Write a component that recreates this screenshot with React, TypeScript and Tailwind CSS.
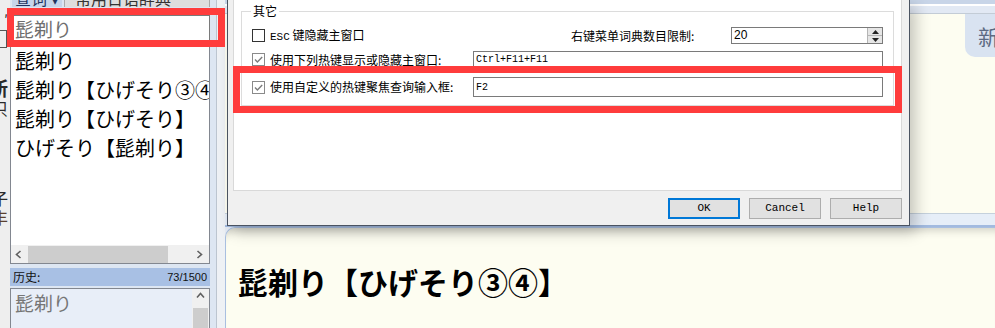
import React from 'react';

const jp = "font-['Noto_Sans_CJK_JP','Noto_Sans_CJK_SC',sans-serif]";
const sc = "font-['Noto_Sans_CJK_SC',sans-serif]";
const mono = "font-['Liberation_Mono',monospace]";

function Check({ checked }: { checked?: boolean }) {
  return (
    <span
      className={`flex h-[13px] w-[13px] shrink-0 items-center justify-center border bg-white ${
        checked ? 'border-[#8a8a8a]' : 'border-[#333333]'
      }`}
    >
      {checked && (
        <svg viewBox="0 0 11 11" className="h-[11px] w-[11px]">
          <path d="M2 5.5l2.4 2.4L9.2 3" fill="none" stroke="#7b7b7b" strokeWidth="1.4" />
        </svg>
      )}
    </span>
  );
}

function Chevron({ dir }: { dir: 'left' | 'right' | 'up' }) {
  const d = dir === 'left' ? 'M5.5 1L1.5 4.5l4 3.5' : dir === 'right' ? 'M1.5 1l4 3.5-4 3.5' : 'M1 5.5l3.5-4 3.5 4';
  return (
    <svg viewBox="0 0 9 9" className="h-[9px] w-[9px]">
      <path d={d} fill="none" stroke="#606060" strokeWidth="1.6" />
    </svg>
  );
}

function Btn({ label, primary }: { label: string; primary?: boolean }) {
  return (
    <div
      className={`flex h-[21px] w-[72px] items-center justify-center bg-[#e1e1e1] text-[11px] text-black ${mono} ${
        primary ? 'border-2 border-[#0078d7]' : 'border border-[#adadad]'
      }`}
    >
      {label}
    </div>
  );
}

function LeftPanel() {
  const items = ['髭剃り', '髭剃り【ひげそり③④】', '髭剃り【ひげそり】', 'ひげそり【髭剃り】'];
  return (
    <div className="flex w-[225px] shrink-0">
      {/* window behind, peeking out */}
      <div className={`flex w-[10px] shrink-0 flex-col overflow-hidden bg-[#eeeeee] pr-[2px] text-[#2a2a2a] ${jp}`}>
        <div className="mt-[12px] flex h-[14px] justify-end text-[14px] leading-[14px]">′</div>
        <div className="mt-[4px] h-[18px] w-[7px] border border-l-0 border-[#555555]" />
        <div className="mt-[30px] flex h-[20px] justify-end">
          <span className="shrink-0 whitespace-nowrap text-[19px] font-bold leading-[20px]">新</span>
        </div>
        <div className="flex h-[20px] justify-end">
          <span className="shrink-0 whitespace-nowrap text-[16px] leading-[20px]">只</span>
        </div>
        <div className="mt-[70px] flex h-[20px] justify-end">
          <span className="shrink-0 whitespace-nowrap text-[16px] leading-[20px]">子</span>
        </div>
        <div className="flex h-[18px] justify-end">
          <span className="shrink-0 whitespace-nowrap text-[16px] leading-[18px] text-[#5a4030]">丰</span>
        </div>
      </div>

      <div className={`flex w-[200px] shrink-0 flex-col bg-[#dde6f2] ${jp}`}>
        <div className="flex h-[7px] overflow-hidden">
          <div className="ml-[2px] w-[50px] bg-[#c6d5ea] pl-[3px] text-[16px] leading-[16px] text-[#1f3560]">
            <div className="mt-[-10px] whitespace-nowrap">查词 ▾</div>
          </div>
          <div className="ml-[2px] flex-1 border-x border-[#a9a9a9] bg-[#dedede] pl-[10px] text-[16px] leading-[16px] text-[#333333]">
            <div className="mt-[-10px] whitespace-nowrap">常用日语辞典</div>
          </div>
        </div>

        <div className="mt-[8px] ml-[2px] flex h-[27px] items-center border border-[#7a7a7a] bg-white pl-[2px] text-[19px] leading-[25px] text-[#6e6e6e]">
          髭剃り
        </div>

        <div className="mt-[1px] flex h-[234px] flex-col border border-[#828790] bg-white">
          <div className="flex-1 overflow-hidden pl-[4px] pt-[2px]">
            {items.map((t) => (
              <div key={t} className="h-[29px] whitespace-nowrap text-[20px] leading-[29px] text-black">
                {t}
              </div>
            ))}
          </div>
          <div className="flex h-[18px] items-center bg-[#f0f0f0]">
            <div className="flex w-[17px] justify-center">
              <Chevron dir="left" />
            </div>
            <div className="h-[17px] w-[140px] bg-[#cdcdcd]" />
            <div className="flex-1" />
            <div className="flex w-[17px] justify-center">
              <Chevron dir="right" />
            </div>
          </div>
        </div>

        <div className="mt-[4px] flex h-[18px] items-center justify-between bg-[#a8c0e4] px-[3px] text-[12px] text-[#111111]">
          <span>历史:</span>
          <span className="font-['Liberation_Sans',sans-serif] text-[11px]">73/1500</span>
        </div>

        <div className="mt-[2px] flex flex-1 border-x border-t border-[#828790] bg-[#e8eef8]">
          <div className="flex-1 pl-[4px] text-[19px] leading-[28px] text-[#767676]">髭剃り</div>
          <div className="flex w-[17px] flex-col items-center bg-[#f0f0f0]">
            <div className="mt-[3px] h-[14px]">
              <Chevron dir="up" />
            </div>
            <div className="mt-[2px] h-[20px] w-[15px] bg-[#cdcdcd]" />
          </div>
        </div>
      </div>

      <div className="flex w-[15px] shrink-0">
        <div className="w-[6px] bg-[#dde6f2]" />
        <div className="w-[1px] bg-[#bcc5d0]" />
        <div className="flex-1 bg-[#eef1f5]" />
      </div>
    </div>
  );
}

function MainWindow() {
  return (
    <div className="flex flex-1 flex-col overflow-hidden bg-[#e6ecf5]">
      <div className="flex h-[213px] flex-col bg-[#fdfdf1]">
        <div className="h-[4px] bg-[#c8d5e8]" />
        <div className="h-[2px] bg-white" />
        <div className="h-[8px] border-b border-[#c3ccd6] bg-[#e2e9f4]" />
        <div className="ml-auto h-[43px] w-[30px] rounded-bl-[10px] bg-[#d9e3f1] pl-[13px] pt-[10px]">
          <span className={`whitespace-nowrap text-[21px] leading-[24px] text-[#5c6a82] ${sc}`}>新</span>
        </div>
      </div>
      <div className="h-[14px] border-t border-b-2 border-t-[#c5d1dc] border-b-[#a2badf] bg-[#e6eef8]" />
      <div className="flex-1 rounded-tl-[10px] border-l border-t border-[#a9bfe0] bg-[#fdfdf1] pl-[12px] pt-[33px] shadow-[inset_0_10px_10px_-8px_rgba(0,0,0,0.2)]">
        <div className={`whitespace-nowrap text-[30px] font-semibold leading-[40px] text-black ${jp}`}>
          髭剃り【ひげそり③④】
        </div>
      </div>
    </div>
  );
}

function OptionsDialog() {
  return (
    <div className={`absolute left-[227px] top-0 flex h-[226px] w-[683px] flex-col border-x border-b border-[#4a5361] bg-[#f0f0f0] shadow-[6px_6px_14px_rgba(0,0,0,0.22)] ${sc}`}>
      <div className="ml-[5px] mr-[7px] h-[191px] border-x border-b border-[#d9d9d9] bg-white px-[7px] pt-[11px] text-[12px] text-black">
        <div className="relative h-[95px] border border-[#dcdcdc] pl-[10px] pr-[9px]">
          <span className="absolute left-[9px] top-[-8px] bg-white px-[2px] text-[12px] leading-[14px]">其它</span>

          <div className="mt-[15px] flex h-[17px] items-center">
            <div className="flex w-[319px] items-center gap-[5px]">
              <Check />
              <span className="whitespace-nowrap">
                <span className={`${mono} text-[11px]`}>ESC</span> 键隐藏主窗口
              </span>
            </div>
            <span className="w-[160px] whitespace-nowrap">右键菜单词典数目限制:</span>
            <div className="flex h-[17px] w-[152px] items-center border border-[#7a7a7a] bg-white">
              <span className="flex-1 pl-[2px] font-['Liberation_Sans',sans-serif] text-[12px] leading-[15px]">20</span>
              <div className="flex h-[15px] w-[15px] flex-col border-l border-[#b5b5b5] bg-[#e6e6e6]">
                <div className="flex flex-1 items-center justify-center border-b border-[#b5b5b5]">
                  <svg viewBox="0 0 7 4" className="h-[4px] w-[7px]">
                    <path d="M0 4L3.5 0 7 4z" fill="#222" />
                  </svg>
                </div>
                <div className="flex flex-1 items-center justify-center">
                  <svg viewBox="0 0 7 4" className="h-[4px] w-[7px]">
                    <path d="M0 0L3.5 4 7 0z" fill="#222" />
                  </svg>
                </div>
              </div>
            </div>
          </div>

          <div className="mt-[7px] flex h-[17px] items-center">
            <div className="flex w-[221px] items-center gap-[5px]">
              <Check checked />
              <span className="whitespace-nowrap">使用下列热键显示或隐藏主窗口:</span>
            </div>
            <div className={`flex h-[17px] w-[410px] items-center border border-[#7a7a7a] bg-white pl-[2px] text-[10px] ${mono}`}>
              Ctrl+F11+F11
            </div>
          </div>

          <div className="mt-[9px] flex h-[20px] items-center">
            <div className="flex w-[221px] items-center gap-[5px]">
              <Check checked />
              <span className="whitespace-nowrap">使用自定义的热键聚焦查询输入框:</span>
            </div>
            <div className={`flex h-[20px] w-[410px] items-center border border-[#7a7a7a] bg-white pl-[2px] text-[10px] ${mono}`}>
              F2
            </div>
          </div>
        </div>
      </div>

      <div className="mr-[7px] mt-[7px] flex justify-end gap-[9px]">
        <Btn label="OK" primary />
        <Btn label="Cancel" />
        <Btn label="Help" />
      </div>
    </div>
  );
}

export default function App() {
  return (
    <div className="relative flex h-[328px] w-[995px] overflow-hidden bg-[#f0f0f0]">
      <LeftPanel />
      <MainWindow />
      <OptionsDialog />

      {/* annotation boxes drawn over the screenshot */}
      <div className="pointer-events-none absolute left-[7px] top-[8px] h-[39px] w-[218px] border-[7px] border-[#ff3c3c]" />
      <div className="pointer-events-none absolute left-[233px] top-[66px] h-[47px] w-[669px] border-[7px] border-[#ff3c3c]" />
    </div>
  );
}
